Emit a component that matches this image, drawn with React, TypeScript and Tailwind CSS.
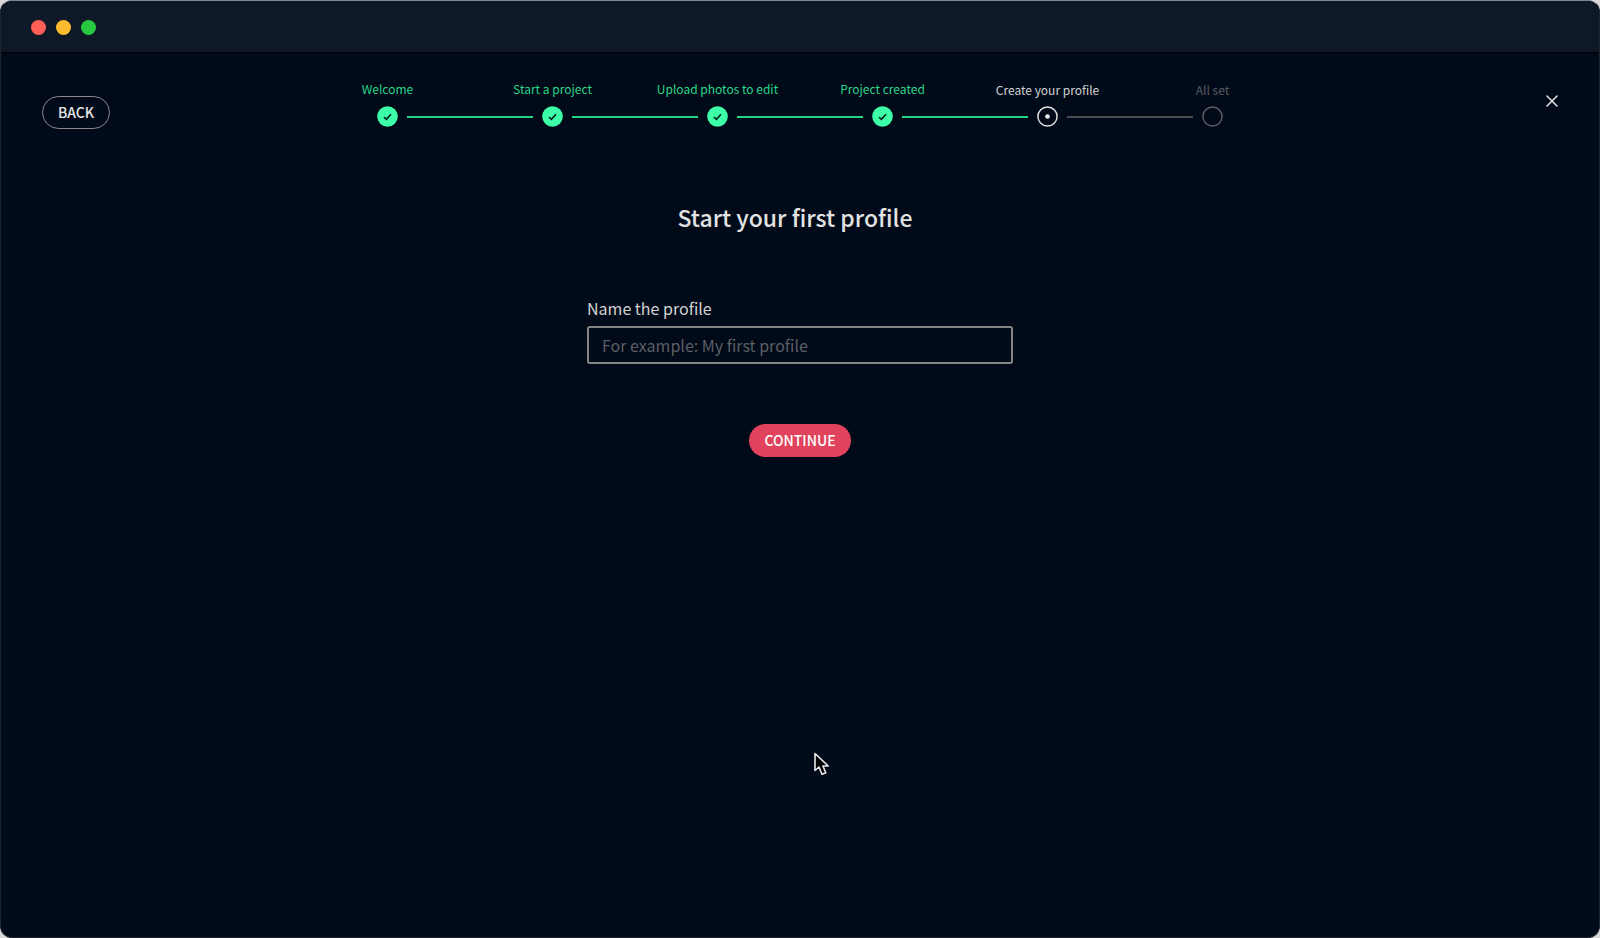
import { useState } from 'react'

type StepState = 'done' | 'current' | 'upcoming'

type Step = {
  label: string
  state: StepState
}

const STEPS: Step[] = [
  { label: 'Welcome', state: 'done' },
  { label: 'Start a project', state: 'done' },
  { label: 'Upload photos to edit', state: 'done' },
  { label: 'Project created', state: 'done' },
  { label: 'Create your profile', state: 'current' },
  { label: 'All set', state: 'upcoming' },
]

const labelStyles: Record<StepState, string> = {
  done: 'text-[#2bd68a] pb-[9px]',
  current: 'text-[#d2d2d2] pb-2',
  upcoming: 'text-[#5a5c61] pb-2',
}

function StepMarker({ state }: { state: StepState }) {
  if (state === 'done') {
    return (
      <svg className="mx-[9px] size-[21px] shrink-0" viewBox="0 0 21 21" fill="none" aria-hidden="true">
        <circle cx="10.5" cy="10.5" r="10.3" fill="#3dffa8" />
        <path d="M7 11.1 9.4 13.3 14 8.2" stroke="#04201c" strokeWidth="1.6" />
      </svg>
    )
  }
  return (
    <svg className="mx-[9px] size-[21px] shrink-0" viewBox="0 0 21 21" fill="none" aria-hidden="true">
      <circle cx="10.5" cy="10.5" r="9.6" stroke={state === 'current' ? '#e0e0e0' : '#5a5c61'} strokeWidth="1.5" />
      {state === 'current' && <circle cx="10.5" cy="10.5" r="2.3" fill="#f2f2f2" />}
    </svg>
  )
}

function Connector({ state }: { state?: StepState }) {
  if (!state) return <span className="flex-1" />
  return <span className={state === 'upcoming' ? 'h-0.5 flex-1 bg-[#4b4c50]' : 'h-0.5 flex-1 bg-[#20d684]'} />
}

function Stepper() {
  return (
    <ol className="flex w-full max-w-[990px]">
      {STEPS.map((step, i) => (
        <li key={step.label} className="flex flex-1 flex-col" aria-current={step.state === 'current' ? 'step' : undefined}>
          <span className={`flex h-[29px] items-end justify-center whitespace-nowrap text-[12px] leading-4 ${labelStyles[step.state]}`}>
            {step.label}
          </span>
          <div className="flex items-center">
            <Connector state={i === 0 ? undefined : step.state} />
            <StepMarker state={step.state} />
            <Connector state={STEPS[i + 1]?.state} />
          </div>
        </li>
      ))}
    </ol>
  )
}

function TitleBar() {
  return (
    <div className="flex h-[52px] items-center gap-[10px] border-b border-black bg-[#0f1827] px-[30px] pt-0.5">
      <span className="size-[15px] rounded-full bg-[#ff5f57]" />
      <span className="size-[15px] rounded-full bg-[#febc2e]" />
      <span className="size-[15px] rounded-full bg-[#28c840]" />
    </div>
  )
}

export default function App() {
  const [name, setName] = useState('')

  return (
    <div className="min-h-screen bg-[#d8d8d8] font-['Noto_Sans_CJK_SC',sans-serif]">
      <div className="relative flex min-h-screen flex-col overflow-hidden rounded-xl border border-[#1c2430] border-t-[#7f868d] bg-[#000a18]">
        <TitleBar />

        <header className="flex items-start justify-between px-[41px] pt-6">
          <div className="flex w-24 pt-[19px]">
            <button type="button" className="h-[33px] w-[68px] rounded-full border border-[#8e8a8c] pb-0.5 text-[14px] font-medium leading-5 text-[#e6e6e6]">
              BACK
            </button>
          </div>
          <Stepper />
          <div className="flex w-24 justify-end pt-3.5">
            <button type="button" aria-label="Close" className="flex h-5 w-3 items-center justify-center text-[#e0e0e0]">
              <svg className="size-3" viewBox="0 0 12 12" fill="none" stroke="currentColor" strokeWidth="1.6" strokeLinecap="round">
                <path d="M1 1 11 11M11 1 1 11" />
              </svg>
            </button>
          </div>
        </header>

        <main className="flex flex-col items-center">
          <h1 className="mt-[70px] pr-[10px] text-[23px] font-medium leading-9 text-[#e2e2e2]">Start your first profile</h1>
          <form className="mt-[61px] flex w-full max-w-[426px] flex-col items-center" onSubmit={(e) => e.preventDefault()}>
            <label htmlFor="profile-name" className="w-full text-[16px] leading-6 text-[#d2d2d2]">Name the profile</label>
            <input
              id="profile-name"
              type="text"
              value={name}
              onChange={(e) => setName(e.target.value)}
              placeholder="For example: My first profile"
              className="mt-1.5 h-[38px] w-full rounded-[3px] border-2 border-[#858585] bg-transparent px-[13px] text-[16px] leading-6 text-[#dedede] outline-none placeholder:text-[#5c5f65]"
            />
            <button type="submit" className="mt-[60px] h-[33px] w-[102px] rounded-full bg-[#e2435c] pb-0.5 text-[14px] font-medium leading-5 text-white">
              CONTINUE
            </button>
          </form>
        </main>

        {/* mouse pointer */}
        <svg className="pointer-events-none absolute left-[813px] top-[751px] h-6 w-4" viewBox="0 0 16 24" aria-hidden="true">
          <path d="M1 1.5V18.5L5 15 8 22.3 11.8 20.7 8.9 14H14.2Z" fill="#000" stroke="#e8e8e8" strokeWidth="1.6" strokeLinejoin="round" />
        </svg>
      </div>
    </div>
  )
}
